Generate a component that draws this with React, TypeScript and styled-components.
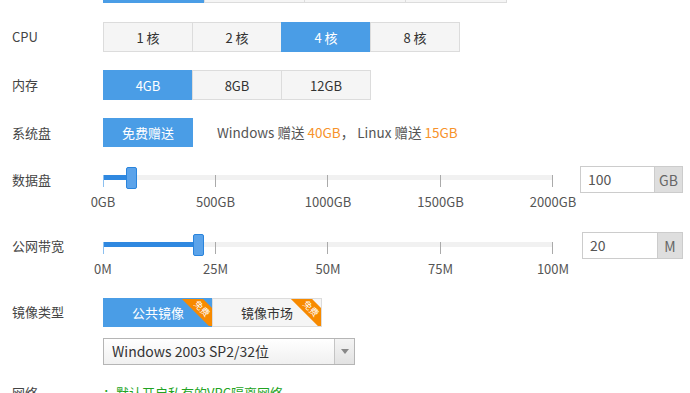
import styled, { createGlobalStyle } from 'styled-components'

const GlobalStyle = createGlobalStyle`
  html, body {
    margin: 0;
    padding: 0;
    background: #fff;
    overflow: hidden;
  }
  body {
    font-family: "Noto Sans CJK SC", "Liberation Sans", sans-serif;
    font-size: 13px;
    color: #333;
  }
`

const BLUE = '#4a9de6'

const Page = styled.div`
  width: 690px;
  height: 393px;
  overflow: hidden;
`

const Form = styled.div`
  margin-top: -27px;
  padding-left: 12px;
`

const Row = styled.div<{ $mb?: number }>`
  display: flex;
  align-items: flex-start;
  margin-bottom: ${(p) => p.$mb ?? 18}px;
`

const Label = styled.div<{ $lh?: number }>`
  width: 91px;
  flex: none;
  line-height: ${(p) => p.$lh ?? 30}px;
  color: #444;
`

const Group = styled.div`
  display: flex;
`

const Option = styled.div<{ $active?: boolean; $w?: number; $h?: number }>`
  position: relative;
  box-sizing: border-box;
  width: ${(p) => p.$w ?? 90}px;
  height: ${(p) => p.$h ?? 30}px;
  display: flex;
  align-items: center;
  justify-content: center;
  overflow: hidden;
  border: 1px solid ${(p) => (p.$active ? BLUE : '#dcdcdc')};
  background: ${(p) => (p.$active ? BLUE : '#f5f5f5')};
  color: ${(p) => (p.$active ? '#fff' : '#333')};
  font-size: 13px;
  & + & {
    margin-left: -1px;
  }
`

const Ribbon = styled.span`
  position: absolute;
  top: 2px;
  right: -13px;
  width: 46px;
  height: 15px;
  line-height: 15px;
  transform: rotate(45deg);
  background: #f78a00;
  color: #fff;
  font-size: 9px;
  text-align: center;
`

const Note = styled.div`
  margin-left: 24px;
  line-height: 29px;
  font-size: 13.5px;
  color: #555;
`

const Orange = styled.span`
  color: #f7922b;
`

const SliderArea = styled.div<{ $trackTop: number }>`
  position: relative;
  width: 450px;
  height: 48px;
  padding-top: ${(p) => p.$trackTop}px;
  box-sizing: border-box;
  flex: none;
`

const Track = styled.div`
  position: relative;
  height: 5px;
  background: #f1f1f1;
`

const Fill = styled.div`
  position: absolute;
  left: 0;
  top: 0;
  bottom: 0;
  background: #2f88e0;
`

const Tick = styled.span<{ $first?: boolean }>`
  position: absolute;
  top: 0;
  width: 1px;
  height: 12px;
  background: ${(p) => (p.$first ? '#8cc0f0' : '#aaa')};
`

const TickLabel = styled.span`
  position: absolute;
  top: 19px;
  transform: translateX(-50%);
  font-size: 13px;
  line-height: 15px;
  color: #555;
  white-space: nowrap;
`

const Handle = styled.span`
  position: absolute;
  top: -8px;
  width: 11px;
  height: 22px;
  box-sizing: border-box;
  border: 1px solid #2a84dc;
  border-radius: 2px;
  background: #5ba3ea;
`

const InputGroup = styled.div<{ $ml: number }>`
  display: flex;
  height: 27px;
  margin-left: ${(p) => p.$ml}px;
`

const Field = styled.div<{ $w: number }>`
  box-sizing: border-box;
  width: ${(p) => p.$w}px;
  border: 1px solid #ccc;
  padding-left: 7px;
  line-height: 25px;
  font-size: 14px;
  color: #555;
  background: #fff;
`

const Addon = styled.div<{ $w: number }>`
  box-sizing: border-box;
  width: ${(p) => p.$w}px;
  border: 1px solid #ccc;
  border-left: none;
  background: #dedede;
  color: #666;
  font-size: 14px;
  display: flex;
  align-items: center;
  justify-content: center;
`

const Select = styled.div`
  box-sizing: border-box;
  width: 252px;
  height: 27px;
  display: flex;
  border: 1px solid #b5b5b5;
  background: linear-gradient(#ffffff, #f0f0f0);
`

const SelectText = styled.div`
  flex: 1;
  padding-left: 8px;
  line-height: 25px;
  font-size: 14px;
  color: #333;
`

const SelectArrow = styled.div`
  width: 19px;
  border-left: 1px solid #c4c4c4;
  background: linear-gradient(#f4f4f4, #e2e2e2);
  display: flex;
  align-items: center;
  justify-content: center;
  &::after {
    content: '';
    border-left: 4px solid transparent;
    border-right: 4px solid transparent;
    border-top: 5px solid #888;
  }
`

const Green = styled.div`
  line-height: 20px;
  color: #22a322;
`

type SliderProps = {
  value: number
  max: number
  marks: string[]
  trackTop: number
}

function Slider({ value, max, marks, trackTop }: SliderProps) {
  const pct = (value / max) * 100
  return (
    <SliderArea $trackTop={trackTop}>
      <Track>
        <Fill style={{ width: `${pct}%` }} />
        {marks.map((m, i) => {
          const left = (i / (marks.length - 1)) * 100
          return (
            <span key={m}>
              <Tick $first={i === 0} style={{ left: `calc(${left}% - ${i === 0 ? 0 : 1}px)` }} />
              <TickLabel style={{ left: `${left}%` }}>{m}</TickLabel>
            </span>
          )
        })}
        <Handle style={{ left: `${pct}%` }} />
      </Track>
    </SliderArea>
  )
}

export default function App() {
  return (
    <Page>
      <GlobalStyle />
      <Form>
        <Row $mb={19}>
          <Label />
          <Group>
            <Option $w={102} $active />
            <Option $w={101} />
            <Option $w={102} />
            <Option $w={102} />
          </Group>
        </Row>

        <Row>
          <Label>CPU</Label>
          <Group>
            <Option>1 核</Option>
            <Option>2 核</Option>
            <Option $active>4 核</Option>
            <Option>8 核</Option>
          </Group>
        </Row>

        <Row>
          <Label>内存</Label>
          <Group>
            <Option $active>4GB</Option>
            <Option>8GB</Option>
            <Option>12GB</Option>
          </Group>
        </Row>

        <Row $mb={19}>
          <Label $lh={29}>系统盘</Label>
          <Option $active $h={29}>免费赠送</Option>
          <Note>
            Windows 赠送 <Orange>40GB</Orange>， Linux 赠送 <Orange>15GB</Orange>
          </Note>
        </Row>

        <Row>
          <Label $lh={28}>数据盘</Label>
          <Slider value={100} max={2000} trackTop={9} marks={['0GB', '500GB', '1000GB', '1500GB', '2000GB']} />
          <InputGroup $ml={27}>
            <Field $w={75}>100</Field>
            <Addon $w={28}>GB</Addon>
          </InputGroup>
        </Row>

        <Row>
          <Label $lh={27}>公网带宽</Label>
          <Slider value={20} max={100} trackTop={10} marks={['0M', '25M', '50M', '75M', '100M']} />
          <InputGroup $ml={29}>
            <Field $w={76}>20</Field>
            <Addon $w={25}>M</Addon>
          </InputGroup>
        </Row>

        <Row $mb={11}>
          <Label $lh={28}>镜像类型</Label>
          <Group>
            <Option $active $w={110} $h={29}>
              公共镜像
              <Ribbon>免费</Ribbon>
            </Option>
            <Option $w={110} $h={29}>
              镜像市场
              <Ribbon>免费</Ribbon>
            </Option>
          </Group>
        </Row>

        <Row $mb={18}>
          <Label />
          <Select>
            <SelectText>Windows 2003 SP2/32位</SelectText>
            <SelectArrow />
          </Select>
        </Row>

        <Row>
          <Label $lh={20}>网络</Label>
          <Green>：默认开启私有的VPC隔离网络</Green>
        </Row>
      </Form>
    </Page>
  )
}
